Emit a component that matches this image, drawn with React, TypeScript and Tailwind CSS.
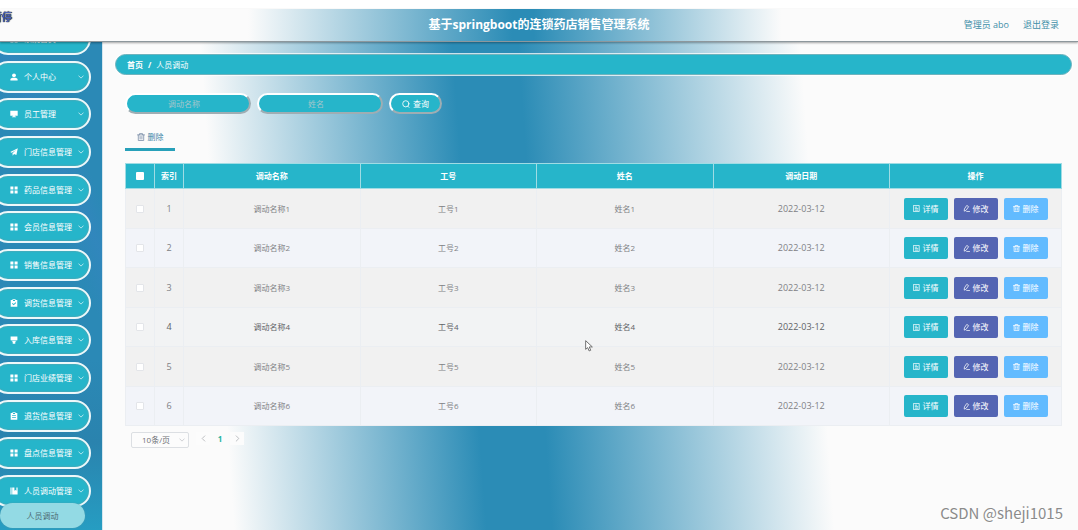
import React from "react";

type IconProps = { className?: string };
type IconType = (props: IconProps) => React.ReactElement;

function Svg({ className = "size-2", children, filled = false }: IconProps & { children: React.ReactNode; filled?: boolean }) {
  return (
    <svg
      viewBox="0 0 16 16"
      aria-hidden="true"
      className={`shrink-0 ${className}`}
      fill={filled ? "currentColor" : "none"}
      stroke={filled ? "none" : "currentColor"}
      strokeWidth={filled ? undefined : 1.7}
      strokeLinecap="round"
      strokeLinejoin="round"
    >
      {children}
    </svg>
  );
}

const UserIcon: IconType = (p) => (
  <Svg {...p} filled>
    <circle cx="8" cy="4.6" r="3.8" />
    <path d="M0.8 15v-2.2C0.8 10.6 3.4 9.4 8 9.4s7.2 1.2 7.2 3.4V15z" />
  </Svg>
);
const MonitorIcon: IconType = (p) => (
  <Svg {...p} filled>
    <path d="M0.6 1.4h14.8v10H9.6v1.8h2.6v1.4H3.8v-1.4h2.6v-1.8H0.6z" />
  </Svg>
);
const SendIcon: IconType = (p) => (
  <Svg {...p} filled>
    <path d="M15.6 0.6 12.8 14 8 11.8l-2.6 3.6-.4-5L12 4.2 3.6 9.6.4 8.2z" />
  </Svg>
);
const GridIcon: IconType = (p) => (
  <Svg {...p} filled>
    <path d="M0.8 1.2h6v6h-6zM9.2 1.2h6v6h-6zM0.8 9h6v6h-6zM9.2 9h6v6h-6z" />
  </Svg>
);
const ClipboardCheckIcon: IconType = (p) => (
  <Svg {...p} filled>
    <path fillRule="evenodd" d="M1.4 2h3.4V.4h6.4V2h3.4v13.6H1.4zM6 2v1.8h4V2zm5.2 4.6L7.4 10.2 5.2 8.2 4 9.4l3.4 3.2 5-4.8z" />
  </Svg>
);
const ClipboardListIcon: IconType = (p) => (
  <Svg {...p} filled>
    <path fillRule="evenodd" d="M1.4 2h3.4V.4h6.4V2h3.4v13.6H1.4zM6 2v1.8h4V2zM4.2 6.6V8h7.6V6.6zm0 3.8v1.4h7.6v-1.4z" />
  </Svg>
);
const BrushIcon: IconType = (p) => (
  <Svg {...p} filled>
    <path d="M1.2 1h13.6v7.4h-13.6zM2.4 9.4h11.2l-3 2.2v3.8H5.4v-3.8z" />
  </Svg>
);
const NotebookIcon: IconType = (p) => (
  <Svg {...p} filled>
    <path d="M0.8 1h2.4v14H0.8zM4.4 1h4.4v6.4l2-1.6 2 1.6V1h2.4v14H4.4z" />
  </Svg>
);
const ChevronDown: IconType = (p) => (
  <Svg {...p}>
    <path d="m2 5 6 6 6-6" />
  </Svg>
);
const ChevronLeft: IconType = (p) => (
  <Svg {...p}>
    <path d="m11 2-6 6 6 6" />
  </Svg>
);
const ChevronRight: IconType = (p) => (
  <Svg {...p}>
    <path d="m5 2 6 6-6 6" />
  </Svg>
);
const SearchIcon: IconType = (p) => (
  <Svg {...p}>
    <circle cx="7.6" cy="7.6" r="6.2" />
    <path d="m11.6 12.4 2.4 2.4" />
  </Svg>
);
const TrashIcon: IconType = (p) => (
  <Svg {...p}>
    <path d="M1 3.8h14M5 3.6V1.2h6v2.4M2.6 4v11h10.8V4M6.2 7v5M9.8 7v5" />
  </Svg>
);
const DocumentIcon: IconType = (p) => (
  <Svg {...p}>
    <path d="M1.8 1h12.4v14H1.8zM5 5h3.4M5 8.4h6M5 11.8h6" />
  </Svg>
);
const EditIcon: IconType = (p) => (
  <Svg {...p}>
    <path d="m9.4 1.4 3.4 2.4-6 8.6-4 1.6.4-4.2zM8.4 15H15" />
  </Svg>
);

const menu: { label: string; icon: IconType }[] = [
  { label: "系统首页", icon: GridIcon },
  { label: "个人中心", icon: UserIcon },
  { label: "员工管理", icon: MonitorIcon },
  { label: "门店信息管理", icon: SendIcon },
  { label: "药品信息管理", icon: GridIcon },
  { label: "会员信息管理", icon: GridIcon },
  { label: "销售信息管理", icon: GridIcon },
  { label: "调货信息管理", icon: ClipboardCheckIcon },
  { label: "入库信息管理", icon: BrushIcon },
  { label: "门店业绩管理", icon: GridIcon },
  { label: "退货信息管理", icon: ClipboardListIcon },
  { label: "盘点信息管理", icon: GridIcon },
  { label: "人员调动管理", icon: NotebookIcon },
];

const rows = [1, 2, 3, 4, 5, 6].map((n) => ({
  id: n,
  name: `调动名称${n}`,
  code: `工号${n}`,
  person: `姓名${n}`,
  date: "2022-03-12",
}));

const actions: { label: string; icon: IconType; color: string }[] = [
  { label: "详情", icon: DocumentIcon, color: "bg-[#26b5ca]" },
  { label: "修改", icon: EditIcon, color: "bg-[#5465b3]" },
  { label: "删除", icon: TrashIcon, color: "bg-[#62bbff]" },
];

function Header() {
  return (
    <header className="relative z-10 mt-[9px] flex h-[33px] items-center justify-center border-b border-[#8d979c] bg-[linear-gradient(90deg,#fbfbfb_23%,#2b8cb6_47.5%,#2b8cb6_49.5%,#fbfbfb_72.5%)] shadow-[0_1px_2px_rgba(0,0,0,0.35)]">
      <span className="absolute -left-2 top-0 text-[10px] leading-4 font-bold text-[#4a62b8] [text-shadow:0_0_1px_#111,0_0_1px_#111]">
        暂停
      </span>
      <h1 className="text-[12px] font-bold text-white">基于springboot的连锁药店销售管理系统</h1>
      <div className="absolute right-[19px] flex gap-[14px] text-[9px] text-[#3f8fa9]">
        <span>管理员 abo</span>
        <a href="#logout">退出登录</a>
      </div>
    </header>
  );
}

function Sidebar() {
  return (
    <aside className="flex w-[103px] shrink-0 flex-col overflow-hidden border-r border-[#d5e6ee] bg-[linear-gradient(65deg,transparent_60%,rgba(60,130,200,0.35)_70%,transparent_78%),linear-gradient(180deg,#2b89b6_0%,#2b89b6_65%,#2a83ae_82%,#269dc2_100%)] pb-[2px]">
      <ul className="-mt-[19px] flex flex-1 flex-col justify-between">
        {menu.map(({ label, icon: Icon }) => (
          <li key={label}>
            <button
              type="button"
              className="-ml-2 flex h-8 w-[99px] items-center rounded-full border-2 border-[#eef8fa] bg-[#26b5ca] pl-4 pr-[5px] text-[8px] text-white shadow-[inset_0_0_2px_#7d9a9c]"
            >
              <Icon className="size-2" />
              <span className="ml-[6px] flex-1 text-left">{label}</span>
              <ChevronDown className="size-[6px]" />
            </button>
          </li>
        ))}
      </ul>
      <a
        href="#transfer"
        className="z-10 -mt-1 mr-[17px] flex h-[25px] items-center justify-center rounded-full bg-[#93dae4] text-[8px] text-[#4d6b73] shadow-[0_0_2px_#4b9db0]"
      >
        人员调动
      </a>
    </aside>
  );
}

const field =
  "h-[21px] rounded-full border-2 border-t-white border-l-white border-r-[#9fadb3] border-b-[#9fadb3] bg-[#26b5ca] text-[8px]";

function SearchBar() {
  return (
    <form className="mt-[18px] ml-[10px] flex gap-[6px]" onSubmit={(e) => e.preventDefault()}>
      <input
        aria-label="调动名称"
        placeholder="调动名称"
        className={`${field} w-[126px] pr-4 pl-2 text-center text-white placeholder:text-[#a5c5cb]`}
      />
      <input
        aria-label="姓名"
        placeholder="姓名"
        className={`${field} w-[126px] pr-4 pl-2 text-center text-white placeholder:text-[#a5c5cb]`}
      />
      <button type="submit" className={`${field} flex w-[53px] items-center justify-center gap-[3px] text-white`}>
        <SearchIcon className="size-2" />
        查询
      </button>
    </form>
  );
}

function DataTable() {
  return (
    <table className="w-full table-fixed border-collapse text-center text-[8px]">
      <colgroup>
        <col className="w-[29px]" />
        <col className="w-[29px]" />
        <col />
        <col />
        <col />
        <col />
        <col className="w-[172px]" />
      </colgroup>
      <thead>
        <tr className="h-[25px] bg-[#26b5ca] text-white">
          <th className="border border-[#9fdce4] p-0">
            <input
              type="checkbox"
              aria-label="全选"
              className="mx-auto block size-2 appearance-none rounded-[1px] bg-white"
            />
          </th>
          {["索引", "调动名称", "工号", "姓名", "调动日期", "操作"].map((h) => (
            <th key={h} className="border border-[#9fdce4] p-0 font-bold">
              {h}
            </th>
          ))}
        </tr>
      </thead>
      <tbody>
        {rows.map((r) => (
          <tr
            key={r.id}
            className={`odd:h-[40px] even:h-[39px] ${
              r.id === 4 ? "bg-[#f2f3f4] text-[#606266]" : "text-[#7f8185] odd:bg-[#f1f1f1] even:bg-[#f2f4f9]"
            }`}
          >
            <td className="border border-[#ebeef2] p-0">
              <input
                type="checkbox"
                aria-label={`选择${r.name}`}
                className="mx-auto block size-2 appearance-none rounded-[1px] border border-[#e3e5e9] bg-white"
              />
            </td>
            <td className="border border-[#ebeef2] p-0 text-[9px]">{r.id}</td>
            <td className="border border-[#ebeef2] p-0">{r.name}</td>
            <td className="border border-[#ebeef2] p-0">{r.code}</td>
            <td className="border border-[#ebeef2] p-0">{r.person}</td>
            <td className="border border-[#ebeef2] p-0 text-[9px]">{r.date}</td>
            <td className="border border-[#ebeef2] p-0">
              <div className="flex justify-center gap-[6px]">
                {actions.map(({ label, icon: Icon, color }) => (
                  <button
                    key={label}
                    type="button"
                    className={`flex h-[22px] w-11 items-center justify-center gap-[3px] rounded-[2px] text-white ${color}`}
                  >
                    <Icon className="size-[7px]" />
                    {label}
                  </button>
                ))}
              </div>
            </td>
          </tr>
        ))}
      </tbody>
    </table>
  );
}

function Pagination() {
  return (
    <div className="mt-[6px] ml-[6px] flex items-start text-[8px] text-[#6d7075]">
      <div className="relative">
        <select
          aria-label="每页条数"
          className="block h-4 w-[58px] appearance-none rounded-[2px] border border-[#dcdfe3] bg-[#fcfcfc] pl-[10px]"
        >
          <option>10条/页</option>
        </select>
        <ChevronDown className="pointer-events-none absolute right-1 top-[5px] size-[6px] text-[#b5b8bd]" />
      </div>
      <nav aria-label="分页" className="ml-[7px] flex">
        <button type="button" aria-label="上一页" className="flex h-[13px] w-[14px] items-center justify-center bg-[#fcfcfc] text-[#a9acb0]">
          <ChevronLeft className="size-[7px]" />
        </button>
        <button type="button" className="mx-[3px] flex h-[13px] w-[14px] items-center justify-center font-bold text-[#25b39f]">
          1
        </button>
        <button type="button" aria-label="下一页" className="flex h-[13px] w-[14px] items-center justify-center bg-[#fcfcfc] text-[#a9acb0]">
          <ChevronRight className="size-[7px]" />
        </button>
      </nav>
    </div>
  );
}

export default function App() {
  return (
    <div className="relative flex min-h-screen flex-col overflow-hidden bg-white font-['Open_Sans','Noto_Sans_CJK_SC',sans-serif]">
      <Header />
      <div className="flex flex-1">
        <Sidebar />
        <main className="min-w-0 flex-1 bg-[linear-gradient(86deg,#fbfbfb_13%,#2b8cb6_38%,#2b8cb6_44.5%,#fbfbfb_72.5%)] pt-3 pr-[6px] pl-3">
          <nav
            aria-label="面包屑"
            className="flex h-[21px] items-center gap-[5px] rounded-full border border-[#6fb3bd] bg-[#26b5ca] pl-[11px] text-[8px] text-white shadow-[0_0_0_1px_rgba(255,255,255,0.75)]"
          >
            <a href="#home" className="font-bold">
              首页
            </a>
            <span className="font-bold">/</span>
            <span>人员调动</span>
          </nav>
          <SearchBar />
          <div className="mt-[11px] mr-[10px] ml-[10px]">
            <button
              type="button"
              className="flex h-[26px] w-[50px] items-center justify-center gap-[3px] border-b-[3px] border-[#27a0b9] text-[8px] text-[#3f86a8]"
            >
              <TrashIcon className="size-2 text-[#8294ac]" />
              删除
            </button>
            <div className="mt-3">
              <DataTable />
            </div>
            <Pagination />
          </div>
        </main>
      </div>
      <svg viewBox="0 0 12 18" aria-hidden="true" className="pointer-events-none absolute top-[340px] left-[585px] h-3 w-2">
        <path d="M1 1v13l3-2.6 2.2 5 2.4-1-2.2-5H11z" fill="#fff" stroke="#666" strokeWidth="1.4" />
      </svg>
      <span className="pointer-events-none absolute right-[15px] bottom-[7px] font-['Noto_Sans_CJK_SC',sans-serif] text-[15px] leading-5 text-[#8b8b8b] [text-shadow:1px_1px_0_#fff]">
        CSDN @sheji1015
      </span>
    </div>
  );
}
